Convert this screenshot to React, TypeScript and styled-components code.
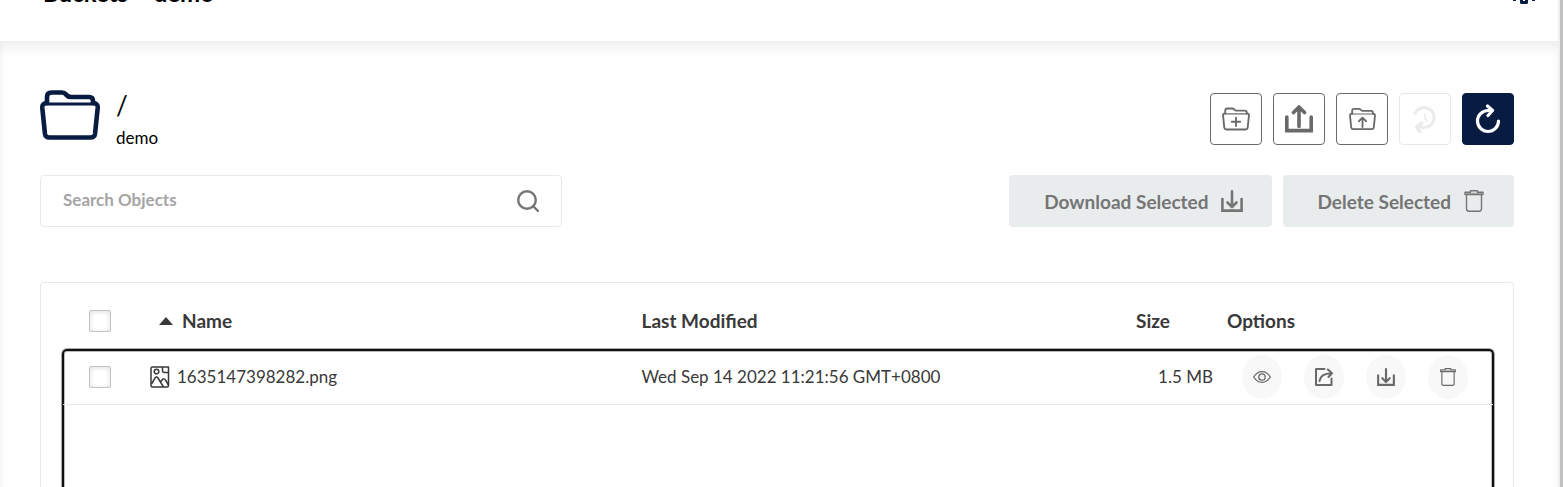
import React from "react";
import styled, { createGlobalStyle } from "styled-components";

const GlobalStyle = createGlobalStyle`
  *, *::before, *::after { box-sizing: border-box; }
  body { margin: 0; background: #fff; font-family: Lato, "Liberation Sans", sans-serif; color: #393939; }
  button, input { font-family: inherit; }
`;

const Shell = styled.div`
  display: flex;
  height: 100vh;
  overflow: hidden;
`;

const Page = styled.div`
  flex: 1;
  min-width: 0;
  display: flex;
  flex-direction: column;
`;

const ScrollTrack = styled.div`
  width: 5px;
  border-left: 2px solid #efefef;
  background: #c1c1c1;
`;

const TopBar = styled.header`
  display: flex;
  align-items: flex-start;
  justify-content: space-between;
  height: 41px;
  padding: 0 22px 0 43px;
  flex-shrink: 0;
`;

const Title = styled.h1`
  margin: -22px 0 0;
  font-size: 24px;
  line-height: 30px;
  font-weight: 700;
  color: #000;
  white-space: pre;
`;

const GearButton = styled.button`
  display: flex;
  margin-top: -20px;
  padding: 0;
  border: 0;
  background: none;
  color: #081c42;
`;

const Content = styled.main`
  flex: 1;
  min-height: 0;
  display: flex;
  flex-direction: column;
  padding: 49px 44px 0 40px;
  box-shadow: inset 0 10px 16px -6px #00000016, inset 4px 0 6px -4px #0000000a;
`;

const Heading = styled.div`
  display: flex;
  justify-content: space-between;
  height: 55px;
`;

const Location = styled.div`
  display: flex;
  gap: 16px;
  color: #081c42;
`;

const Path = styled.div`
  color: #000;
`;

const Slash = styled.h2`
  margin: 0;
  font-size: 26px;
  line-height: 30px;
  font-weight: 400;
`;

const BucketName = styled.div`
  font-size: 17px;
  line-height: 36px;
`;

const Actions = styled.div`
  display: flex;
  align-items: flex-end;
  gap: 11px;
`;

const ActionButton = styled.button<{ $kind?: "primary" | "disabled" }>`
  display: flex;
  align-items: center;
  justify-content: center;
  width: 52px;
  height: 52px;
  padding: 0;
  border-radius: 4px;
  border: 1px solid ${(p) => (p.$kind === "primary" ? "#081c42" : p.$kind === "disabled" ? "#e8e8e8" : "#696969")};
  background: ${(p) => (p.$kind === "primary" ? "#081c42" : "#fff")};
  color: ${(p) => (p.$kind === "primary" ? "#fff" : p.$kind === "disabled" ? "#ebebeb" : "#696969")};
`;

const Toolbar = styled.div`
  display: flex;
  justify-content: space-between;
  margin-top: 30px;
`;

const SearchBox = styled.label`
  display: flex;
  align-items: center;
  width: 522px;
  height: 52px;
  padding: 0 21px 0 22px;
  border: 1px solid #eaeaea;
  border-radius: 4px;
  color: #757575;
`;

const SearchInput = styled.input`
  flex: 1;
  min-width: 0;
  padding: 0 0 4px;
  border: 0;
  outline: 0;
  background: none;
  font-size: 17px;
  font-weight: 700;
  color: #393939;
  &::placeholder { color: #a5a5a5; opacity: 1; }
`;

const BulkActions = styled.div`
  display: flex;
  gap: 11px;
`;

const BulkButton = styled.button`
  display: flex;
  align-items: center;
  gap: 12px;
  height: 52px;
  padding: 0 29px 0 35px;
  border: 0;
  border-radius: 4px;
  background: #e8eced;
  font-size: 19px;
  font-weight: 700;
  color: #757575;
`;

const Card = styled.section`
  flex: 1;
  min-height: 0;
  display: flex;
  margin: 55px 0 -4px;
  padding: 10px 19px 0 21px;
  border: 1px solid #eaeaea;
  border-bottom: 0;
  border-radius: 4px 4px 0 0;
`;

const ObjectTable = styled.table`
  flex: 1;
  display: flex;
  flex-direction: column;
`;

const Head = styled.thead`
  display: block;
`;

const Body = styled.tbody`
  display: block;
  flex: 1;
  border: 2px solid #101010;
  border-bottom: 0;
  border-radius: 5px 5px 0 0;
  box-shadow: 0 0 0 1px #aaa, inset 0 0 0 1px #bbb;
`;

const Row = styled.tr<{ $head?: boolean }>`
  display: grid;
  grid-template-columns: 87px 12fr 11fr 134px 267px;
  align-items: center;
  height: ${(p) => (p.$head ? "56px" : "54px")};
  margin: ${(p) => (p.$head ? "0" : "0 -1px")};
  padding-bottom: ${(p) => (p.$head ? "0" : "2px")};
  border-bottom: ${(p) => (p.$head ? "0" : "1px solid #e5e5e5")};
  text-align: left;
`;

const HeadCell = styled.th<{ $end?: boolean }>`
  display: flex;
  align-items: center;
  justify-content: ${(p) => (p.$end ? "flex-end" : "flex-start")};
  gap: 9px;
  padding: ${(p) => (p.$end ? "0 57px 0 0" : "0")};
  font-size: 19px;
  line-height: 24px;
  font-weight: 700;
`;

const SortHead = styled(HeadCell)`
  padding-left: 10px;
`;

const CheckHead = styled(HeadCell)`
  padding-left: 27px;
`;

const Cell = styled.td<{ $end?: boolean }>`
  display: flex;
  align-items: center;
  justify-content: ${(p) => (p.$end ? "flex-end" : "flex-start")};
  gap: 7px;
  padding: ${(p) => (p.$end ? "0 13px 0 0" : "0")};
  font-size: 17px;
  line-height: 24px;
`;

const CheckCell = styled(Cell)`
  padding-left: 26px;
`;

const OptionsCell = styled(Cell)`
  gap: 22px;
  padding-left: 16px;
`;

const Checkbox = styled.input`
  appearance: none;
  width: 22px;
  height: 22px;
  margin: 0;
  border: 1px solid #c3c3c3;
  border-radius: 2px;
  background: #fff;
  box-shadow: inset 0 1px 5px #00000020;
`;

const OptionButton = styled.button`
  display: flex;
  align-items: center;
  justify-content: center;
  width: 40px;
  height: 44px;
  padding: 0;
  border: 0;
  border-radius: 50%;
  background: #f8f8f8;
  color: #696969;
`;

type IconProps = { size: number };

type FolderProps = { width: number; height: number; stroke: number; children?: React.ReactNode };

const Folder = ({ width, height, stroke, children }: FolderProps) => (
  <svg width={width} height={height} viewBox="0 0 60 50" fill="none" stroke="currentColor" strokeWidth={stroke} strokeLinecap="round" strokeLinejoin="round">
    <path d="M7 13V7Q7 2.5 11.5 2.5H22Q24.5 2.5 26 4.5L27 5.5Q28.5 7 31 7H49Q53 7 53 11V13" />
    <path d="M7 13Q2 13 2.3 18L5 44Q5.5 47.5 9.5 47.5H50.5Q54.5 47.5 55 44L57.7 18Q58 13 53 13" />
    <path d="M6 14H54" strokeWidth={stroke * 0.6} />
    {children}
  </svg>
);

const UploadIcon = () => (
  <svg width="28" height="28" viewBox="0 0 28 28" fill="none" stroke="currentColor" strokeWidth="3.6" strokeLinecap="round">
    <path d="M1.8 12V25.6H26.2V12" />
    <path d="M14 3V21.5M8.5 7.5L14 2L19.5 7.5" strokeLinejoin="round" />
  </svg>
);

const RewindIcon = () => (
  <svg width="26" height="28" viewBox="0 0 26 28" fill="none" stroke="currentColor" strokeWidth="3.2" strokeLinecap="round" strokeLinejoin="round">
    <path d="M3 8.5A10 10 0 1 1 12.5 22.5L5 22" />
    <path d="M10 18L4.5 22L8 27" />
    <path d="M13 9V13.5L15.5 16.5" strokeWidth="1.5" />
  </svg>
);

const RefreshIcon = () => (
  <svg width="26" height="30" viewBox="0 0 26 30" fill="none" stroke="currentColor" strokeWidth="3.2" strokeLinecap="round" strokeLinejoin="round">
    <path d="M23.5 17A10.5 10.5 0 1 1 13 6.5H17" />
    <path d="M12.5 2L17.5 6.5L13 11.5" />
  </svg>
);

const SearchIcon = () => (
  <svg width="24" height="24" viewBox="0 0 24 24" fill="none" stroke="currentColor" strokeWidth="2.4" strokeLinecap="round">
    <circle cx="11" cy="11" r="8.8" />
    <path d="M17.5 17.5L22 22" />
  </svg>
);

const DownloadIcon = ({ size }: IconProps) => (
  <svg width={size} height={size} viewBox="0 0 22 22" fill="none" stroke="currentColor" strokeWidth="2.6">
    <path d="M1.4 8V20.6H20.6V8" />
    <path d="M11 1.4V16M6.5 12.5L11 17L15.5 12.5" strokeLinecap="round" strokeLinejoin="round" />
  </svg>
);

const TrashIcon = ({ size }: IconProps) => (
  <svg width={size} height={size} viewBox="0 0 22 22" fill="none" stroke="currentColor" strokeWidth="1.4" strokeLinejoin="round">
    <path d="M2 2.2H7.5V.8H14.5V2.2H20V4.5H2Z" />
    <path d="M3.5 4.5V18.5Q3.5 21.2 6 21.2H16Q18.5 21.2 18.5 18.5V4.5" />
    <path d="M3 3.4H19" strokeOpacity=".5" />
  </svg>
);

const EyeIcon = () => (
  <svg width="18" height="12" viewBox="0 0 18 12" fill="none" stroke="currentColor" strokeWidth="1.3">
    <path d="M.7 6Q4 .7 9 .7T17.3 6Q14 11.3 9 11.3T.7 6Z" />
    <circle cx="9" cy="6" r="3.2" />
  </svg>
);

const ShareIcon = () => (
  <svg width="18" height="18" viewBox="0 0 18 18" fill="none" stroke="currentColor" strokeWidth="2" strokeLinecap="round" strokeLinejoin="round">
    <path d="M9.5 1H1V17H16.5V10.5" />
    <path d="M4.5 13Q5.5 5.5 16.5 5.2M12.8 1.5L17 5.2L13.5 9" />
  </svg>
);

const ImageFileIcon = () => (
  <svg width="20" height="22" viewBox="0 0 20 22" fill="none" stroke="currentColor" strokeWidth="1.5" strokeLinejoin="round">
    <path d="M2.5 1H18.5V19.5Q18.5 21 17 21H2.5Q1 21 1 19.5V2.5Q1 1 2.5 1Z" />
    <path d="M12.5 1V4.5Q12.5 6.5 14.5 6.5H18.5" />
    <circle cx="6.5" cy="5.5" r="2.3" />
    <path d="M1.5 18L5 12Q6.5 10 8 12L13.5 21M10.5 16L12.5 13.5Q14 12 15.5 14L18.5 19" />
  </svg>
);

const SortIcon = () => (
  <svg width="14" height="8" viewBox="0 0 14 8" fill="currentColor">
    <path d="M0 8L7 0L14 8Z" />
  </svg>
);

const GearIcon = () => (
  <svg width="24" height="24" viewBox="0 0 24 24" fill="none" stroke="currentColor" strokeWidth="3">
    <circle cx="12" cy="10" r="7" />
    <path d="M9.5 17V22.5H14.5V17M1 19.5H4M20 19.5H23" strokeLinejoin="round" />
  </svg>
);

export default function App() {
  return (
    <Shell>
      <GlobalStyle />
      <Page>
        <TopBar>
          <Title>Buckets &gt; demo</Title>
          <GearButton aria-label="Configure bucket"><GearIcon /></GearButton>
        </TopBar>
        <Content>
          <Heading>
            <Location>
              <Folder width={60} height={50} stroke={4.6} />
              <Path>
                <Slash>/</Slash>
                <BucketName>demo</BucketName>
              </Path>
            </Location>
            <Actions>
              <ActionButton aria-label="Create new path">
                <Folder width={28} height={24} stroke={4}><path d="M30 22V40M21 31H39" /></Folder>
              </ActionButton>
              <ActionButton aria-label="Upload file"><UploadIcon /></ActionButton>
              <ActionButton aria-label="Upload folder">
                <Folder width={27} height={24} stroke={4}><path d="M30 23V43M22 30L30 22L38 30" /></Folder>
              </ActionButton>
              <ActionButton aria-label="Rewind" $kind="disabled" disabled><RewindIcon /></ActionButton>
              <ActionButton aria-label="Refresh" $kind="primary"><RefreshIcon /></ActionButton>
            </Actions>
          </Heading>
          <Toolbar>
            <SearchBox>
              <SearchInput type="text" placeholder="Search Objects" aria-label="Search Objects" />
              <SearchIcon />
            </SearchBox>
            <BulkActions>
              <BulkButton disabled>Download Selected<DownloadIcon size={22} /></BulkButton>
              <BulkButton disabled>Delete Selected<TrashIcon size={22} /></BulkButton>
            </BulkActions>
          </Toolbar>
          <Card>
            <ObjectTable>
              <Head>
                <Row $head>
                  <CheckHead><Checkbox type="checkbox" aria-label="Select all" /></CheckHead>
                  <SortHead><SortIcon />Name</SortHead>
                  <HeadCell>Last Modified</HeadCell>
                  <HeadCell $end>Size</HeadCell>
                  <HeadCell>Options</HeadCell>
                </Row>
              </Head>
              <Body>
                <Row>
                  <CheckCell><Checkbox type="checkbox" aria-label="Select 1635147398282.png" /></CheckCell>
                  <Cell><ImageFileIcon />1635147398282.png</Cell>
                  <Cell>Wed Sep 14 2022 11:21:56 GMT+0800</Cell>
                  <Cell $end>1.5 MB</Cell>
                  <OptionsCell>
                    <OptionButton aria-label="Preview"><EyeIcon /></OptionButton>
                    <OptionButton aria-label="Share"><ShareIcon /></OptionButton>
                    <OptionButton aria-label="Download"><DownloadIcon size={18} /></OptionButton>
                    <OptionButton aria-label="Delete"><TrashIcon size={18} /></OptionButton>
                  </OptionsCell>
                </Row>
              </Body>
            </ObjectTable>
          </Card>
        </Content>
      </Page>
      <ScrollTrack />
    </Shell>
  );
}
